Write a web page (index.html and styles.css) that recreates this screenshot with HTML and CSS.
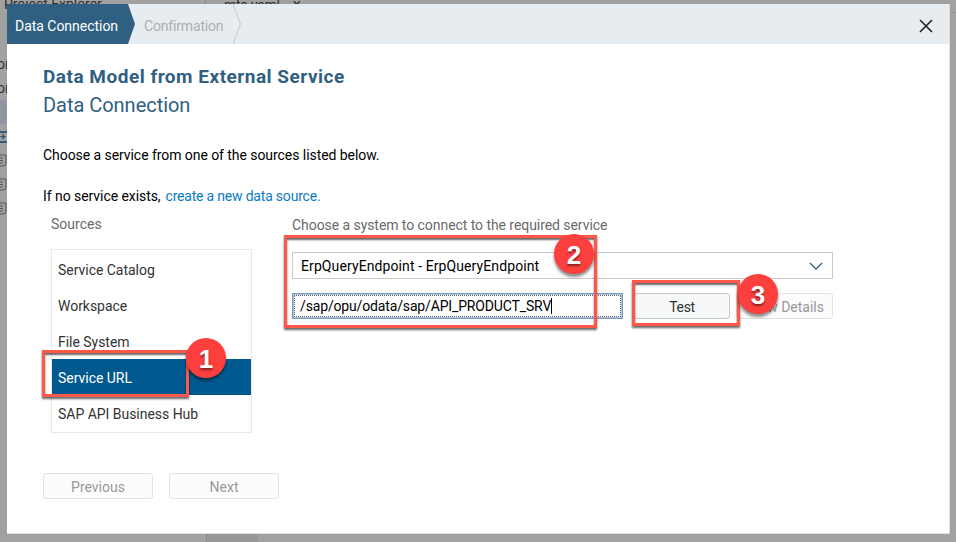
FILE: index.html
```
<!DOCTYPE html>
<html lang="en">
<head>
<meta charset="utf-8">
<title>Data Connection</title>
<link rel="stylesheet" href="styles.css">
</head>
<body>
<div class="workspace">
  <div class="explorer">
    <div class="explorer-title">Project Explorer</div>
    <div class="tree-row first">or</div>
    <div class="tree-row">or</div>
    <div class="tree-row picked"></div>
    <div class="tree-row target"><i>+</i></div>
    <div class="tree-row"><svg class="doc" viewBox="0 0 10 13"><path d="M0 1h8v8q0 3-3 3H0M0 4h5M0 6.500h5M0 9h5"/></svg></div>
    <div class="tree-row"><svg class="doc" viewBox="0 0 10 13"><path d="M0 1h8v8q0 3-3 3H0M0 4h5M0 6.500h5M0 9h5"/></svg></div>
    <div class="tree-row"><svg class="doc" viewBox="0 0 10 13"><path d="M0 1h8v8q0 3-3 3H0M0 4h5M0 6.500h5M0 9h5"/></svg></div>
  </div>
  <div class="editor">
    <div class="tabs"><span class="tab">mta.yaml</span><span class="tab-close">×</span></div>
    <div class="gutter"></div>
  </div>
</div>

<section class="dialog">
  <header class="steps">
    <svg class="step-shapes" viewBox="0 0 240 40"><path class="done" d="M0 0H121L128 20L121 40H0Z"/><path class="next" d="M226 0L233.500 20L226 40"/></svg>
    <span class="step current">Data Connection</span>
    <span class="step upcoming">Confirmation</span>
    <svg class="close" viewBox="0 0 14 14"><path d="M1 1L13 13M13 1L1 13"/></svg>
  </header>
  <main class="content">
    <h1>Data Model from External Service</h1>
    <h2>Data Connection</h2>
    <p class="intro">Choose a service from one of the sources listed below.</p>
    <p class="hint"><span>If no service exists,</span><a>create a new data source.</a></p>
    <div class="columns">
      <div class="sources">
        <div class="label">Sources</div>
        <ul class="list">
          <li>Service Catalog</li>
          <li>Workspace</li>
          <li>File System</li>
          <li class="selected">Service URL</li>
          <li>SAP API Business Hub</li>
        </ul>
      </div>
      <div class="system">
        <div class="label choose">Choose a system to connect to the required service</div>
        <div class="select"><span>ErpQueryEndpoint - ErpQueryEndpoint</span><svg class="chevron" viewBox="0 0 14 8"><path d="M1 1L7 7L13 1"/></svg></div>
        <div class="row">
          <div class="input"><div class="focus"><span>/sap/opu/odata/sap/API_PRODUCT_SRV</span><b class="caret"></b></div></div>
          <div class="button test">Test</div>
          <div class="button disabled details">View Details</div>
        </div>
      </div>
    </div>
    <footer>
      <div class="button disabled">Previous</div>
      <div class="button disabled">Next</div>
    </footer>
  </main>
</section>

<div class="mark mark-1"></div>
<div class="mark mark-2"></div>
<div class="mark mark-3"></div>
<div class="badge badge-1">1</div>
<div class="badge badge-2">2</div>
<div class="badge badge-3">3</div>
</body>
</html>
```
FILE: styles.css
```
* { box-sizing: border-box; }
body { margin: 0; width: 956px; height: 542px; overflow: hidden; position: relative; background: #a1a1a1; font: 14px/20px Roboto, sans-serif; color: #000; }
h1, h2, p, ul { margin: 0; padding: 0; font-size: inherit; font-weight: normal; }
.workspace { display: flex; height: 542px; }
.explorer { width: 206px; color: #303030; overflow: hidden; }
.explorer-title { height: 20px; line-height: 22px; margin-top: -7px; padding-left: 4px; letter-spacing: -.05px; border-right: 1px solid #898c91; }
.tree-row { height: 24px; line-height: 24px; display: flex; align-items: center; margin-left: -3px; }
.tree-row.first { margin-top: 39px; }
.picked { background: #8f969f; margin-left: 0; }
.target { height: 12px; margin: 7px 0 5px; border-top: 2px solid #315d7c; border-bottom: 2px solid #315d7c; color: #315d7c; }
.target i { font: bold 11px/8px Roboto, sans-serif; }
.doc { width: 10px; height: 13px; margin-left: 1px; fill: none; stroke: #555; }
.editor { flex: 1; display: flex; flex-direction: column; justify-content: space-between; }
.tabs { height: 20px; margin-top: -7px; line-height: 24px; padding-left: 18px; border-bottom: 1px solid #929292; color: #303030; letter-spacing: -.3px; }
.tab-close { margin-left: 13px; font-size: 16px; }
.gutter { width: 52px; height: 20px; background: #98989a; border-left: 1px solid #88888e; }

.dialog { position: absolute; left: 7px; top: 4px; width: 943px; height: 530px; background: #fff; border-right: 1px solid #dedede; border-bottom: 1px solid #dedede; }
.steps { position: relative; height: 40px; background: #e7ecf0; display: flex; align-items: center; padding: 3px 16px 0 8px; }
.step-shapes { position: absolute; left: 0; top: 0; width: 240px; height: 40px; }
.done { fill: #2f6082; }
.next { fill: none; stroke: #cdd1d4; stroke-width: 1.200; }
.step { position: relative; line-height: 20px; white-space: nowrap; }
.current { color: #fff; width: 129px; letter-spacing: -.03px; }
.upcoming { color: #abafb2; letter-spacing: -.17px; }
.close { width: 14px; height: 14px; margin-left: auto; fill: none; stroke: #222; stroke-width: 1.600; }

.content { padding: 20px 0 0 36px; }
h1, h2 { height: 28px; line-height: 26px; color: #2f6082; white-space: nowrap; }
h1 { font-size: 19px; font-weight: bold; letter-spacing: .5px; }
h2 { font-size: 20px; letter-spacing: -.03px; }
.intro { margin-top: 25px; letter-spacing: -.06px; }
.hint { margin-top: 21px; display: flex; gap: 5px; letter-spacing: -.06px; }
.hint a { color: #0a7abf; letter-spacing: -.2px; }
.columns { display: flex; padding-left: 8px; margin-top: 8px; height: 219px; }
.sources { width: 241px; }
.label { color: #6a6a6a; height: 20px; }
.list { width: 201px; height: 184px; margin-top: 15px; border: 1px solid #e8e8e4; padding-top: 1px; list-style: none; color: #333; }
.list li { height: 36px; line-height: 38px; padding-left: 6px; letter-spacing: -.03px; }
.list .selected { background: #00598f; color: #fff; }
.system { width: 541px; }
.choose { padding-top: 1px; letter-spacing: -.06px; }
.select { margin-top: 18px; height: 27px; border: 1px solid #c9c9c9; display: flex; align-items: center; justify-content: space-between; padding: 0 9px 0 8px; letter-spacing: .1px; }
.chevron { width: 14px; height: 8px; fill: none; stroke: #2f6082; stroke-width: 1.300; }
.row { display: flex; margin-top: 14px; height: 26px; }
.input { width: 331px; padding: 1px; border: 1px solid #7c9fc0; background: #a9c2d9; letter-spacing: -.15px; }
.focus { height: 22px; background: #fff; border: 1px dotted #666; display: flex; align-items: center; padding-left: 5px; }
.caret { width: 1px; height: 16px; background: #000; }
.button { height: 26px; border: 1px solid #c4c9cb; border-radius: 3px; background: #f7f9f9; color: #333; text-align: center; line-height: 26px; }
.test { width: 96px; margin-left: 11px; letter-spacing: -.3px; }
.disabled { border-color: #e2e2e2; background: #fcfcfc; color: #999; }
.details { width: 97px; margin-left: 6px; padding-right: 8px; text-align: right; white-space: nowrap; }
footer { display: flex; gap: 16px; margin-top: 40px; }
footer .button { width: 110px; }

.mark { position: absolute; border: 3px solid #ff5749; box-shadow: 0 2px 2px rgba(0,0,0,.6), inset 0 2px 2px rgba(0,0,0,.6); }
.mark-1 { left: 42px; top: 350px; width: 147px; height: 47px; }
.mark-2 { left: 284px; top: 235px; width: 313px; height: 93px; }
.mark-3 { left: 632px; top: 280px; width: 108px; height: 46px; }
.badge { position: absolute; width: 40px; height: 40px; border-radius: 50%; background: #fd3f3d; color: #fff; font: bold 26px/42px "Liberation Sans", sans-serif; text-align: center; text-shadow: 0 2px 2px rgba(0,0,0,.45); box-shadow: 0 3px 3px rgba(0,0,0,.45); }
.badge-1 { left: 186px; top: 338px; }
.badge-2 { left: 554px; top: 234px; }
.badge-3 { left: 738px; top: 274px; }
```
